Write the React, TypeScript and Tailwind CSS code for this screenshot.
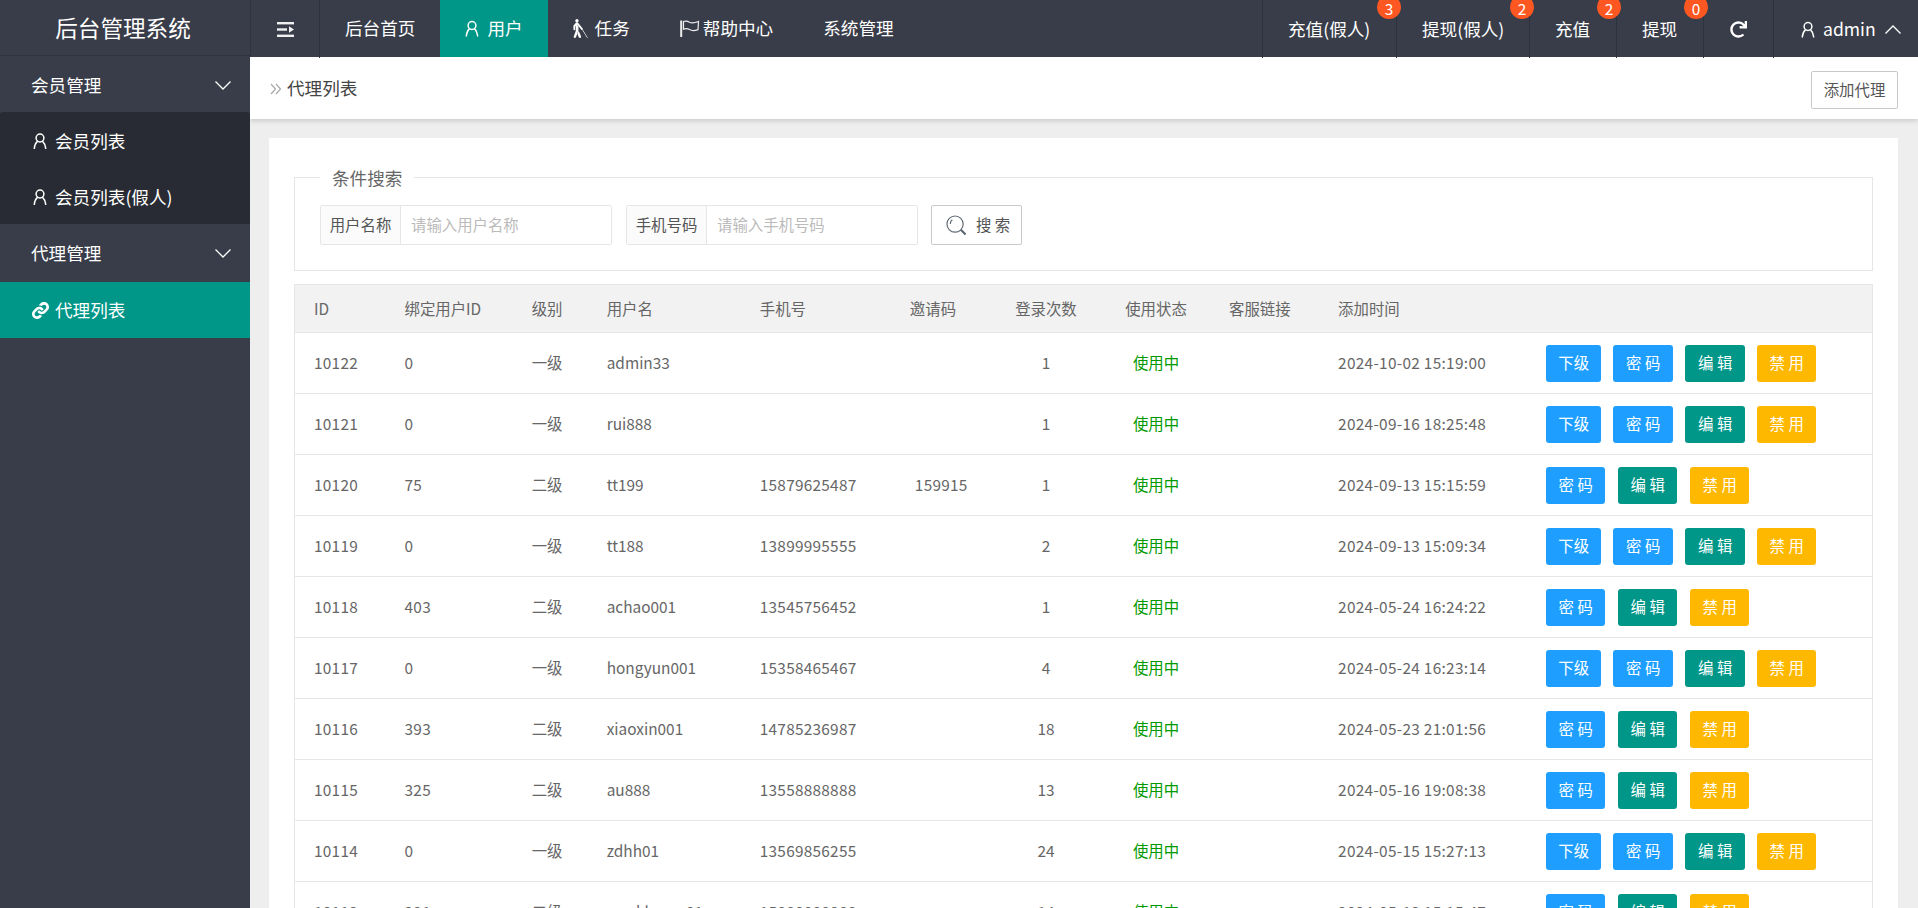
import React from "react";
import { FaBlind, FaLink, FaRedo } from "react-icons/fa";

const FONT = "font-['Noto_Sans_CJK_SC','Noto_Sans',sans-serif]";

function UserIcon({ className = "" }: { className?: string }) {
  return (
    <svg viewBox="0 0 16 16" className={className} fill="none" stroke="currentColor" strokeWidth="1.5" strokeLinecap="round">
      <circle cx="8" cy="5" r="3.9" />
      <path d="M5.2 8.6C3.6 10 2.6 12.5 2.3 15.4M10.8 8.6C12.4 10 13.4 12.5 13.7 15.4" />
    </svg>
  );
}

function FlagIcon() {
  return (
    <svg viewBox="0 0 20 17" className="w-[20px] h-[17px]" fill="none" stroke="currentColor">
      <path d="M1.2 0.5V17" strokeWidth="2" />
      <path d="M3.5 1.5C6 0.5 7.5 1 9.5 2.2C12 3.6 14.5 3 18.5 1.5L18 9.6C14.5 11 12 11 9.5 9.6C7.5 8.4 6 8.2 3.5 9.2Z" strokeWidth="1.2" />
    </svg>
  );
}

function Chevron({ up = false, className = "" }: { up?: boolean; className?: string }) {
  return (
    <svg viewBox="0 0 16 9" className={`w-[16px] h-[9px] ${className}`} fill="none" stroke="currentColor" strokeWidth="1.3">
      <path d={up ? "M0.5 8.5L8 1L15.5 8.5" : "M0.5 0.5L8 8L15.5 0.5"} />
    </svg>
  );
}

function TopItem({ children, active = false }: { children: React.ReactNode; active?: boolean }) {
  return (
    <div className={`h-[57px] px-[25px] flex items-center gap-[7px] text-[17.6px] text-white ${active ? "bg-[#009688]" : ""}`}>
      {children}
    </div>
  );
}

function RightItem({ label, badge, width }: { label: string; badge: string; width: string }) {
  return (
    <div className={`relative h-[58px] border-l border-[#2e323d] pl-[25px] flex items-center text-[17.6px] text-white whitespace-nowrap ${width}`}>
      {label}
      <span className="absolute right-[-5px] top-[-5px] z-10 w-[24px] h-[24px] rounded-full bg-[#ff5722] text-white text-[15.4px] text-center">
        <span className="absolute left-0 right-0 top-[5px] leading-[16px]">{badge}</span>
      </span>
    </div>
  );
}

function SideGroup({ label, className = "" }: { label: string; className?: string }) {
  return (
    <div className={`pl-[31px] pr-[19px] flex items-center justify-between text-[17.6px] text-white ${className}`}>
      {label}
      <Chevron />
    </div>
  );
}

function SubItem({ label }: { label: string }) {
  return (
    <div className="h-[56px] pl-[32px] pt-[2px] flex items-center gap-[7px] text-[17.6px] text-white">
      <UserIcon className="w-[16px] h-[16px]" />
      {label}
    </div>
  );
}

function InputGroup({ label, placeholder }: { label: string; placeholder: string }) {
  return (
    <div className="w-[292px] h-[40px] flex border border-[#e6e6e6] rounded-[2px] text-[15.4px]">
      <div className="w-[80px] shrink-0 bg-[#fbfbfb] border-r border-[#e6e6e6] flex items-center justify-center text-[#555]">{label}</div>
      <div className="flex-1 pl-[10px] flex items-center text-[#bbb]">{placeholder}</div>
    </div>
  );
}

function Btn({ label, color, width }: { label: string; color: string; width: string }) {
  return (
    <div className={`h-[37px] rounded-[3px] text-white text-[15.4px] flex items-center justify-center whitespace-pre ${color} ${width}`}>
      {label}
    </div>
  );
}

type Row = [string, string, string, string, string, string, string, string];

const rows: Row[] = [
  ["10122", "0", "一级", "admin33", "", "", "1", "2024-10-02 15:19:00"],
  ["10121", "0", "一级", "rui888", "", "", "1", "2024-09-16 18:25:48"],
  ["10120", "75", "二级", "tt199", "15879625487", "159915", "1", "2024-09-13 15:15:59"],
  ["10119", "0", "一级", "tt188", "13899995555", "", "2", "2024-09-13 15:09:34"],
  ["10118", "403", "二级", "achao001", "13545756452", "", "1", "2024-05-24 16:24:22"],
  ["10117", "0", "一级", "hongyun001", "15358465467", "", "4", "2024-05-24 16:23:14"],
  ["10116", "393", "二级", "xiaoxin001", "14785236987", "", "18", "2024-05-23 21:01:56"],
  ["10115", "325", "二级", "au888", "13558888888", "", "13", "2024-05-16 19:08:38"],
  ["10114", "0", "一级", "zdhh01", "13569856255", "", "24", "2024-05-15 15:27:13"],
  ["10113", "391", "二级", "weekhome01", "15888888888", "", "14", "2024-05-13 15:15:47"],
];

export default function App() {
  return (
    <div className={`w-[1918px] h-[908px] overflow-hidden flex flex-col bg-[#393d49] ${FONT}`}>
      <header className="h-[57px] shrink-0 flex bg-[#393d49] relative z-20">
        <div className="w-[251px] h-[56px] shrink-0 border-r border-b border-[#30333d] pr-[4px] flex items-center justify-center text-[22.6px] text-white">
          后台管理系统
        </div>
        <div className="w-[69px] h-[58px] shrink-0 border-r border-[#2e323d] flex items-center pl-[26px]">
          <svg viewBox="0 0 17 15" className="w-[17px] h-[15px]" fill="#f0f0f0">
            <rect x="0" y="0" width="17" height="2.4" />
            <rect x="0" y="6.3" width="10" height="2.4" />
            <path d="M12 4.2L17 7.5L12 10.8Z" />
            <rect x="0" y="12.6" width="17" height="2.4" />
          </svg>
        </div>
        <TopItem>后台首页</TopItem>
        <TopItem active>
          <UserIcon className="w-[16px] h-[17px] -ml-[1px]" />
          用户
        </TopItem>
        <TopItem>
          <FaBlind className="w-[15px] h-[19px]" />
          任务
        </TopItem>
        <TopItem>
          <span className="flex -mr-[4px] text-[#eee]"><FlagIcon /></span>
          帮助中心
        </TopItem>
        <TopItem>系统管理</TopItem>
        <div className="ml-auto flex">
          <RightItem label="充值(假人)" badge="3" width="w-[134px]" />
          <RightItem label="提现(假人)" badge="2" width="w-[133px]" />
          <RightItem label="充值" badge="2" width="w-[87px]" />
          <RightItem label="提现" badge="0" width="w-[87px]" />
          <div className="w-[70px] h-[58px] border-l border-[#2e323d] flex items-center justify-center text-white">
            <FaRedo className="w-[17px] h-[17px]" />
          </div>
          <div className="w-[145px] h-[58px] border-l border-[#2e323d] pl-[26px] flex items-center gap-[7px] text-[17.6px] text-white">
            <UserIcon className="w-[16px] h-[17px]" />
            admin
            <Chevron up className="ml-[2px]" />
          </div>
        </div>
      </header>

      <div className="flex-1 flex min-h-0">
        <aside className="w-[250px] shrink-0 bg-[#393d49]">
          <SideGroup label="会员管理" className="h-[55px] pt-[2px]" />
          <div className="bg-[#282b33] rounded-t-[3px]">
            <SubItem label="会员列表" />
            <SubItem label="会员列表(假人)" />
          </div>
          <SideGroup label="代理管理" className="h-[58px]" />
          <div className="h-[56px] bg-[#009688] pl-[32px] flex items-center gap-[6px] text-[17.6px] text-white">
            <FaLink className="w-[17px] h-[17px] -scale-x-100 rotate-90" />
            代理列表
          </div>
        </aside>

        <main className="flex-1 min-w-0 bg-[#eeeeee] overflow-hidden">
          <div className="h-[62px] bg-white shadow-[0_2px_5px_rgba(0,0,0,0.15)] pl-[20px] pr-[20px] flex items-center">
            <svg viewBox="0 0 12 12" className="w-[12px] h-[12px] mt-[2px] mr-[5px]" fill="none" stroke="#a8a8a8" strokeWidth="1.2">
              <path d="M1 1L5.5 6L1 11M6 1L10.5 6L6 11" />
            </svg>
            <span className="text-[17.6px] text-[#444]">代理列表</span>
            <div className="ml-auto w-[87px] h-[38px] mt-[3px] border border-[#c9c9c9] rounded-[2px] flex items-center justify-center text-[15.4px] text-[#555]">
              添加代理
            </div>
          </div>

          <div className="ml-[19px] mr-[20px] mt-[19px] bg-white pt-[27px] pl-[25px] pr-[25px]">
            <fieldset className="border border-[#e6e6e6] pl-[25px] pb-[25px]">
              <legend className="px-[12px] h-[24px] leading-[26px] text-[17.6px] text-[#666]">条件搜索</legend>
              <div className="flex pt-[16px]">
                <InputGroup label="用户名称" placeholder="请输入用户名称" />
                <div className="ml-[14px]"><InputGroup label="手机号码" placeholder="请输入手机号码" /></div>
                <div className="ml-[13px] w-[91px] h-[40px] border border-[#c9c9c9] rounded-[2px] flex items-center pl-[14px] gap-[9px] text-[15.4px] text-[#555]">
                  <svg viewBox="0 0 22 22" className="w-[21px] h-[21px] shrink-0" fill="none" stroke="#5c6670" strokeWidth="1.2">
                    <circle cx="9.5" cy="9.5" r="8.5" />
                    <path d="M4.5 9.5C4.5 7.5 5.2 6 6.6 5" />
                    <path d="M15.5 15.5L20.5 20.5" strokeWidth="2.2" />
                  </svg>
                  <span className="whitespace-pre">搜 索</span>
                </div>
              </div>
            </fieldset>

            <table className="mt-[13px] w-[1579px] table-fixed border-collapse border border-[#e6e6e6] text-[15.4px] text-[#666]">
              <colgroup>
                <col className="w-[91px]" />
                <col className="w-[127px]" />
                <col className="w-[75px]" />
                <col className="w-[153px]" />
                <col className="w-[155px]" />
                <col className="w-[101px]" />
                <col className="w-[98px]" />
                <col className="w-[122px]" />
                <col className="w-[102px]" />
                <col className="w-[208px]" />
                <col className="w-[345px]" />
              </colgroup>
              <thead>
                <tr className="h-[48px] bg-[#f2f2f2] border-b border-[#e6e6e6] font-normal">
                  <th className="pl-[19px] text-left font-normal">ID</th>
                  <th className="pl-[19px] text-left font-normal">绑定用户ID</th>
                  <th className="pl-[19px] text-left font-normal">级别</th>
                  <th className="pl-[19px] text-left font-normal">用户名</th>
                  <th className="pl-[19px] text-left font-normal">手机号</th>
                  <th className="pl-[14px] text-left font-normal">邀请码</th>
                  <th className="text-center font-normal">登录次数</th>
                  <th className="text-center font-normal">使用状态</th>
                  <th className="pl-[12px] text-left font-normal">客服链接</th>
                  <th className="pl-[19px] text-left font-normal">添加时间</th>
                  <th />
                </tr>
              </thead>
              <tbody>
                {rows.map((r) => (
                  <tr key={r[0]} className="h-[61px] border-b border-[#e6e6e6]">
                    <td className="pl-[19px] tracking-[0.25px]">{r[0]}</td>
                    <td className="pl-[19px] tracking-[0.25px]">{r[1]}</td>
                    <td className="pl-[19px]">{r[2]}</td>
                    <td className="pl-[19px]">{r[3]}</td>
                    <td className="pl-[19px] tracking-[0.25px]">{r[4]}</td>
                    <td className="pl-[19px] tracking-[0.25px]">{r[5]}</td>
                    <td className="text-center">{r[6]}</td>
                    <td className="text-center text-[#009900]">使用中</td>
                    <td />
                    <td className="pl-[19px] whitespace-nowrap tracking-[0.3px]">{r[7]}</td>
                    <td className="pl-[19px]">
                      {r[2] === "一级" ? (
                        <div className="flex gap-[12px]">
                          <Btn label="下级" color="bg-[#1e9fff]" width="w-[55px]" />
                          <Btn label="密 码" color="bg-[#1e9fff]" width="w-[60px]" />
                          <Btn label="编 辑" color="bg-[#009688]" width="w-[60px]" />
                          <Btn label="禁 用" color="bg-[#ffb800]" width="w-[59px]" />
                        </div>
                      ) : (
                        <div className="flex gap-[13px]">
                          <Btn label="密 码" color="bg-[#1e9fff]" width="w-[59px]" />
                          <Btn label="编 辑" color="bg-[#009688]" width="w-[59px]" />
                          <Btn label="禁 用" color="bg-[#ffb800]" width="w-[59px]" />
                        </div>
                      )}
                    </td>
                  </tr>
                ))}
              </tbody>
            </table>
          </div>
        </main>
      </div>
    </div>
  );
}
